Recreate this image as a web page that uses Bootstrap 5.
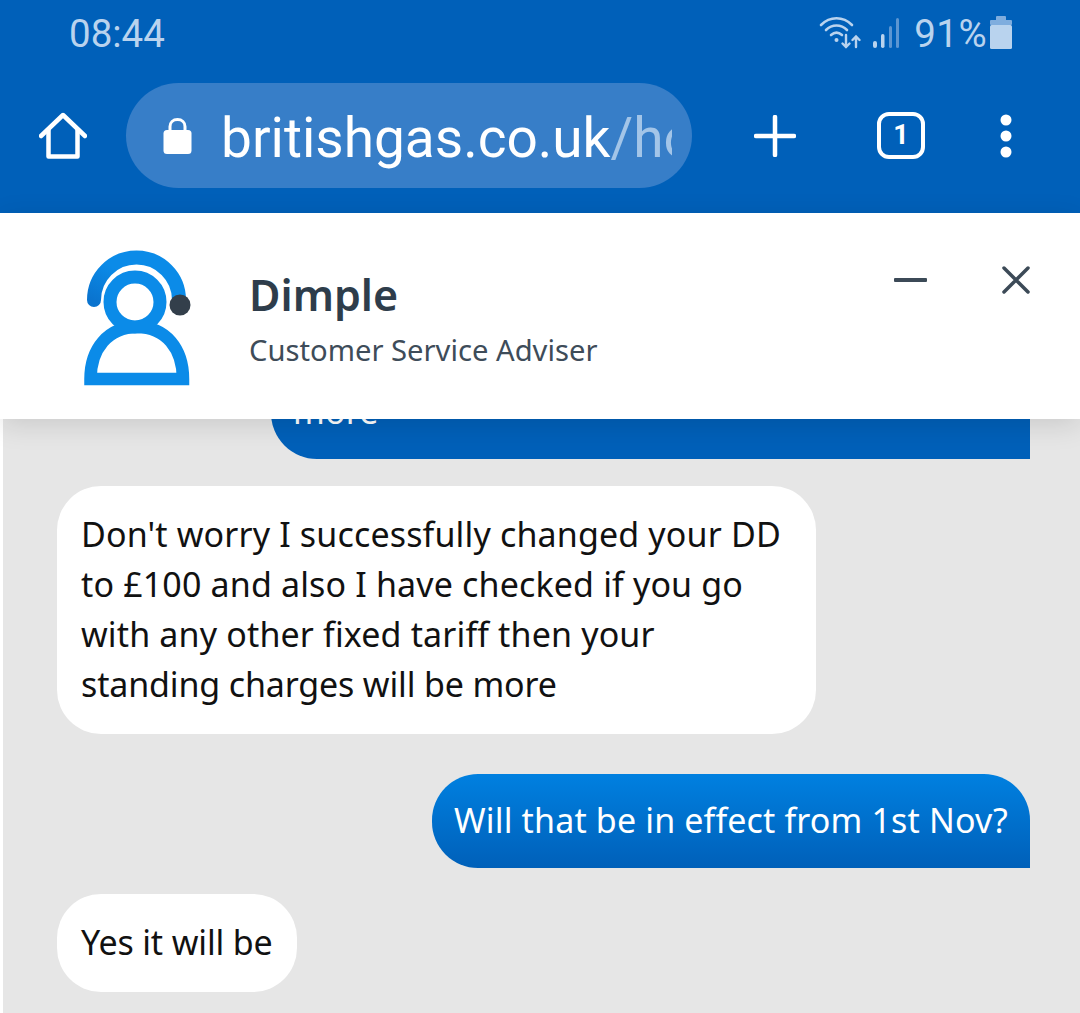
<!DOCTYPE html>
<html lang="en">
<head>
  <meta charset="UTF-8" />
  <meta name="viewport" content="width=device-width, initial-scale=1.0" />
  <title>British Gas chat</title>
  <link href="https://cdn.jsdelivr.net/npm/bootstrap@5.3.3/dist/css/bootstrap.min.css" rel="stylesheet" />
  <style>
    html, body { height: 100%; }
    body { background: #fff; overflow: hidden; font-family: "Noto Sans", sans-serif; }
    .phone { height: 1013px; width: 1080px; }

    .status-row { height: 68px; background: #0060b9; color: #b9d3ee; font-family: Roboto, sans-serif; font-size: 38.5px; padding: 0 68px 0 69px; }
    .status-time { line-height: 1; }
    .status-pct { line-height: 1; margin-left: 14px; letter-spacing: .4px; }
    .status-ico { margin-top: -3px; }
    .status-signal { margin-left: 11px; }
    .status-batt { margin-left: 3px; margin-top: -4px; }

    .tool-row { height: 145px; background: #0060b9; padding: 0 0 10px 39px; }
    .url-pill { width: 566px; height: 105px; margin-left: 39px; margin-right: 62px; padding: 0 20px 0 37px; border-radius: 53px; background: #377ec8; }
    .url-text { font-family: Roboto, sans-serif; font-size: 55px; line-height: 1.2; margin-top: 5px; color: #fff; margin-left: 29px; white-space: nowrap; overflow: hidden; flex: 1; }
    .url-text span { color: #a3c5e8; }
    .tab-count { width: 48px; height: 47px; margin: 0 75px 0 81px; border: 4px solid #fff; border-radius: 12px; color: #fff; font-family: Roboto, sans-serif; font-weight: 700; font-size: 27px; line-height: 1; }

    .agent-head { height: 206px; background: #fff; padding: 0 50px 0 83px; box-shadow: 0 6px 26px rgba(0, 0, 0, .12); z-index: 2; }
    .agent-logo { margin-top: 3px; }
    .agent-name { font-family: "Noto Sans", sans-serif; font-weight: 600; font-size: 43px; line-height: 1; color: #2e3d4b; margin-bottom: 20px; }
    .agent-role { font-family: "Noto Sans", sans-serif; font-size: 29.2px; line-height: 1; color: #3e4c59; }
    .agent-text { margin-left: 58px; margin-top: 7px; }
    .head-btns { gap: 74px; margin-top: 53px; }

    .chat-area { flex: 1; min-height: 0; overflow: hidden; background: #e6e6e6; margin-left: 3px; padding: 0 50px 21px 54px; }
    .msg { font-size: 34px; letter-spacing: .15px; line-height: 50px; padding: 23px 24px 25px; }
    .msg-tight { letter-spacing: -.15px; }
    .msg-in { align-self: flex-start; background: #fff; color: #111; border-radius: 44px; }
    .msg-wide { width: 759px; }
    .msg-out { align-self: flex-end; color: #fff; padding: 21px 22px 23px; border-radius: 46px 46px 0 46px; background: linear-gradient(#0080e0, #0060b9); }
    .msg-flat { background: #0060b9; width: 759px; }
    .gap-a { margin-top: 27px; }
    .gap-b { margin-top: 40px; }
    .gap-c { margin-top: 26px; }
  </style>
</head>
<body>
  <div class="phone d-flex flex-column">

    <!-- status bar -->
    <div class="status-row d-flex align-items-center justify-content-between">
      <div class="status-time">08:44</div>
      <div class="d-flex align-items-center">
        <svg class="status-ico" width="42" height="34" viewBox="0 0 42 34" fill="none" stroke="#b9d3ee" stroke-linecap="round">
          <path d="M2 9C11 0 24 0 33 9" stroke-width="2.6" />
          <path d="M7 14C13 8 22 8 28 14" stroke-width="2.6" />
          <path d="M12 19C15.500 16 19.500 16 23 19" stroke-width="2.6" />
          <circle cx="17.500" cy="24" r="2" fill="#b9d3ee" stroke="none" />
          <path d="M27 19V31M23.500 27.500L27 31L30.500 27.500" stroke-width="2.4" />
          <path d="M37 31V21M33.500 24L37 20.500L40.500 24" stroke-width="2.4" />
        </svg>
        <svg class="status-ico status-signal" width="28" height="32" viewBox="0 0 28 32">
          <rect x="1" y="24" width="4" height="7" rx="2" fill="#b9d3ee" />
          <rect x="9" y="17" width="3.500" height="14" rx="1.700" fill="#b9d3ee" />
          <rect x="17" y="9" width="3" height="22" rx="1.500" fill="#5c96d2" />
          <rect x="24" y="1" width="3" height="30" rx="1.500" fill="#5c96d2" />
        </svg>
        <div class="status-pct">91%</div>
        <svg class="status-batt" width="22" height="33" viewBox="0 0 22 33">
          <rect x="6" y="0" width="10" height="5" rx="1" fill="#7fadde" />
          <rect x="0" y="4" width="22" height="5" rx="1" fill="#7fadde" />
          <rect x="0" y="9" width="22" height="24" rx="1.500" fill="#b9d3ee" />
        </svg>
      </div>
    </div>

    <!-- browser toolbar -->
    <div class="tool-row d-flex align-items-center">
      <svg width="48" height="48" viewBox="0 0 48 48" fill="none" stroke="#fff" stroke-width="4.500" stroke-linecap="round" stroke-linejoin="round">
        <path d="M2 24L24 3L46 24" />
        <path d="M9.500 18V44.500H38.500V18" />
      </svg>
      <div class="url-pill d-flex align-items-center">
        <svg width="29" height="38" viewBox="0 0 29 38">
          <path d="M7 14V9.500C7 5.500 10 2.500 14.500 2.500S22 5.500 22 9.500V14" fill="none" stroke="#fff" stroke-width="3" />
          <rect x="0.500" y="13" width="28" height="24" rx="3.500" fill="#fff" />
        </svg>
        <div class="url-text">britishgas.co.uk<span>/home</span></div>
      </div>
      <svg width="42" height="42" viewBox="0 0 42 42" stroke="#fff" stroke-width="4.500" stroke-linecap="round">
        <path d="M21 2V40M2 21H40" />
      </svg>
      <div class="tab-count d-flex align-items-center justify-content-center">1</div>
      <svg width="12" height="44" viewBox="0 0 12 44" fill="#fff">
        <circle cx="6" cy="6" r="5.500" />
        <circle cx="6" cy="22" r="5.500" />
        <circle cx="6" cy="38" r="5.500" />
      </svg>
    </div>

    <!-- adviser header -->
    <div class="agent-head d-flex align-items-center position-relative">
      <svg class="agent-logo" width="108" height="137" viewBox="0 0 108 137" fill="none">
        <defs>
          <linearGradient id="arcFill" x1="0" y1="1" x2="1" y2="0">
            <stop offset="0" stop-color="#0a74cf" />
            <stop offset=".5" stop-color="#0b8be8" />
          </linearGradient>
        </defs>
        <path d="M11 51A42.500 42.500 0 0 1 96 51" stroke="url(#arcFill)" stroke-width="14" stroke-linecap="round" />
        <path d="M7.500 130C7.500 100 25 78 54 78C83 78 100 100 100 130Z" stroke="#0b8be8" stroke-width="12.500" />
        <circle cx="52" cy="53" r="25" stroke="#0b8be8" stroke-width="13" />
        <circle cx="97" cy="56" r="10.500" fill="#333f4b" />
      </svg>
      <div class="agent-text flex-grow-1">
        <div class="agent-name">Dimple</div>
        <div class="agent-role">Customer Service Adviser</div>
      </div>
      <div class="head-btns d-flex align-self-start align-items-center">
        <svg width="34" height="6" viewBox="0 0 34 6"><rect y="1" width="33" height="4" rx="1" fill="#3c4a57" /></svg>
        <svg width="28" height="28" viewBox="0 0 28 28" stroke="#3c4a57" stroke-width="3.500" stroke-linecap="round"><path d="M2 2L26 26M26 2L2 26" /></svg>
      </div>
    </div>

    <!-- messages -->
    <div class="chat-area d-flex flex-column justify-content-end">
      <div class="msg msg-out msg-flat flex-shrink-0">more</div>
      <div class="msg msg-in msg-wide gap-a flex-shrink-0">Don't worry I successfully changed your DD<br />to £100 and also I have checked if you go<br />with any other fixed tariff then your<br /><span class="msg-tight">standing charges will be more</span></div>
      <div class="msg msg-out gap-b flex-shrink-0">Will that be in effect from 1st Nov?</div>
      <div class="msg msg-in msg-tight gap-c flex-shrink-0">Yes it will be</div>
    </div>
  </div>

  <script src="https://cdn.jsdelivr.net/npm/bootstrap@5.3.3/dist/js/bootstrap.bundle.min.js"></script>
</body>
</html>
